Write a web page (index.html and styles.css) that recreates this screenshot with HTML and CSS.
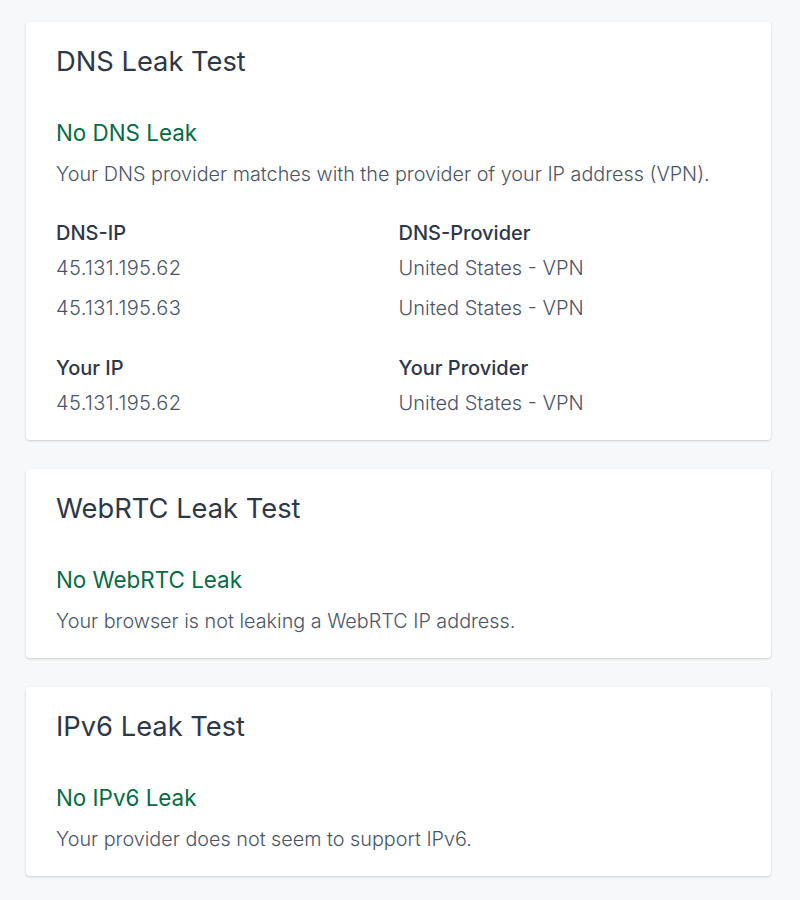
FILE: index.html
```html
<!DOCTYPE html>
<html lang="en">
<head>
<meta charset="utf-8">
<title>Leak Tests</title>
<link rel="stylesheet" href="styles.css">
</head>
<body>
<main class="page">
  <section class="card card-dns">
    <h2 class="card-title">DNS Leak Test</h2>
    <h3 class="status">No DNS Leak</h3>
    <p class="desc">Your DNS provider matches with the provider of your IP address (VPN).</p>
    <div class="grid">
      <div class="col">
        <div class="label">DNS-IP</div>
        <div class="value num">45.131.195.62</div>
        <div class="value num">45.131.195.63</div>
      </div>
      <div class="col">
        <div class="label">DNS-Provider</div>
        <div class="value">United States - VPN</div>
        <div class="value">United States - VPN</div>
      </div>
      <div class="col group">
        <div class="label">Your IP</div>
        <div class="value num">45.131.195.62</div>
      </div>
      <div class="col group">
        <div class="label">Your Provider</div>
        <div class="value">United States - VPN</div>
      </div>
    </div>
  </section>
  <section class="card">
    <h2 class="card-title">WebRTC Leak Test</h2>
    <h3 class="status">No WebRTC Leak</h3>
    <p class="desc">Your browser is not leaking a WebRTC IP address.</p>
  </section>
  <section class="card">
    <h2 class="card-title">IPv6 Leak Test</h2>
    <h3 class="status">No IPv6 Leak</h3>
    <p class="desc">Your provider does not seem to support IPv6.</p>
  </section>
</main>
</body>
</html>
```
FILE: styles.css
```css
html, body {
  margin: 0;
  padding: 0;
  background: #f7f8fa;
}
body {
  font-family: Inter, "Noto Sans", sans-serif;
  color: #2d3748;
}
.page {
  display: flex;
  flex-direction: column;
  gap: 29px;
  padding: 22px 29px 22px 26px;
}
.card {
  background: #ffffff;
  border-radius: 4px;
  box-shadow: 0 1px 3px rgba(0, 0, 0, 0.12), 0 1px 2px rgba(0, 0, 0, 0.06);
  padding: 20px 30px 22px;
}
.card-dns {
  padding-bottom: 17px;
}
.card-title {
  margin: 0;
  font-size: 27.3px;
  line-height: 40px;
  font-weight: 400;
  color: #2d3748;
}
.status {
  margin: 36px 0 0;
  font-size: 22.4px;
  line-height: 30px;
  font-weight: 400;
  color: #046c46;
}
.desc {
  margin: 11px 0 0;
  font-size: 19.8px;
  line-height: 30px;
  font-weight: 300;
  color: #4a5568;
}
.grid {
  display: grid;
  grid-template-columns: 1fr 1fr;
  margin-top: 29px;
}
.group {
  margin-top: 25px;
}
.label {
  font-size: 20px;
  line-height: 30px;
  font-weight: 500;
  color: #2d3748;
}
.value {
  font-size: 20px;
  line-height: 40px;
  font-weight: 300;
  color: #4a5568;
}
.num {
  letter-spacing: 0.4px;
}
```
